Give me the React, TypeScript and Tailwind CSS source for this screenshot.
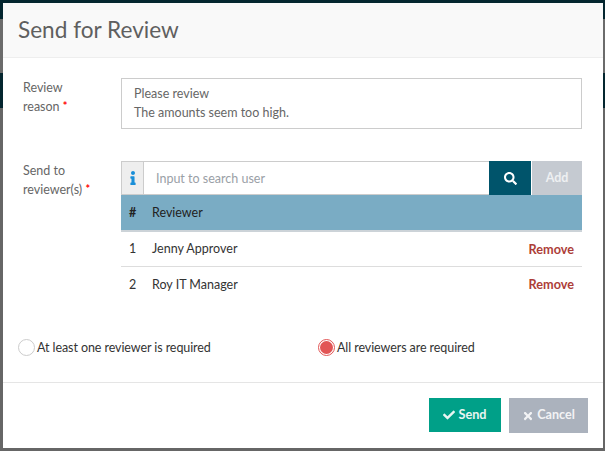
import { FaCheck, FaInfo, FaSearch, FaTimes } from "react-icons/fa";

const reviewers = [
  { id: 1, name: "Jenny Approver" },
  { id: 2, name: "Roy IT Manager" },
];

function Radio({ label, checked }: { label: string; checked?: boolean }) {
  return (
    <label className="flex items-center text-[12.5px] tracking-[-0.08px] text-[#333]">
      {checked ? (
        <span className="flex size-[17px] items-center justify-center rounded-full border border-[#e25555] bg-white">
          <span className="size-[13px] rounded-full bg-[#e25555]" />
        </span>
      ) : (
        <span className="size-[17px] rounded-full border border-[#ccc] bg-white" />
      )}
      <span className="ml-[2px] pt-[2px]">{label}</span>
    </label>
  );
}

function Required() {
  return <span className="relative -top-[1px] text-[11px] font-bold leading-none text-[#f00]">*</span>;
}

export default function App() {
  return (
    <div className="relative h-[451px] w-[605px] overflow-hidden bg-[#666] font-['Lato',sans-serif]">
      <div className="flex h-full flex-col">
        <div className="h-[19px] bg-[#04262f]" />
        <div className="h-[54px] bg-[#6b6b6b]" />
        <div className="h-[35px] bg-[#04262f]" />
        <div className="flex-1 bg-[#666]" />
      </div>
      <div className="absolute bottom-[3px] left-[3px] right-[2px] top-[3px] flex flex-col bg-white">
        <header className="flex h-[55px] items-center border-b border-[#eee] bg-[#f9f9f9] pl-[15px]">
          <h2 className="text-[22.6px] leading-none text-[#5f5f5f]">Send for Review</h2>
        </header>
        <section className="flex-1 pl-[20px] pr-[21px]">
          <div className="mt-[20px] flex">
            <div className="w-[98px] text-[12.5px] leading-[19px] text-[#666]">
              Review
              <br />
              reason <Required />
            </div>
            <div className="h-[51px] flex-1 border border-[#ccc] px-[12px] pt-[5px] text-[12.5px] leading-[19px] text-[#666]">
              Please review
              <br />
              The amounts seem too high.
            </div>
          </div>
          <div className="mt-[32px] flex">
            <div className="w-[98px] text-[12.5px] leading-[19px] text-[#666]">
              Send to
              <br />
              reviewer(s) <Required />
            </div>
            <div className="flex-1">
              <div className="flex h-[34px]">
                <div className="flex w-[23px] items-center justify-center border border-[#ccc] bg-[#eee] text-[14px] text-[#1a8fd8]">
                  <FaInfo />
                </div>
                <div className="flex flex-1 items-center border-y border-[#ccc] pl-[12px] pt-[3px] text-[12.5px] text-[#9aa0a6]">
                  Input to search user
                </div>
                <button type="button" className="flex w-[42px] items-center justify-center bg-[#00546b] text-[13px] text-white">
                  <FaSearch />
                </button>
                <button type="button" className="ml-px w-[50px] bg-[#c5cad1] text-[12.5px] font-bold text-[#eef0f2]">
                  Add
                </button>
              </div>
              <div className="flex h-[37px] items-center border-b-2 border-[#ccd3d8] bg-[#7aacc4] pt-[1px] text-[12.5px] text-[#222]">
                <span className="w-[31px] pl-[8px] font-bold">#</span>
                <span>Reviewer</span>
              </div>
              {reviewers.map((reviewer) => (
                <div
                  key={reviewer.id}
                  className="flex h-[35px] items-center border-b border-[#ddd] pt-[1px] text-[12.5px] text-[#333] last:border-b-0"
                >
                  <span className="w-[31px] pl-[8px]">{reviewer.id}</span>
                  <span className="flex-1">{reviewer.name}</span>
                  <span className="pr-[8px] text-[12.7px] font-bold text-[#ad3d38]">Remove</span>
                </div>
              ))}
            </div>
          </div>
        </section>
        <div className="flex h-[68px] items-center pb-[2px] pl-[15px]">
          <div className="w-[300px]">
            <Radio label="At least one reviewer is required" />
          </div>
          <Radio checked label="All reviewers are required" />
        </div>
        <footer className="flex h-[66px] items-start justify-end gap-[8px] border-t border-[#e5e5e5] pr-[15px] pt-[15px]">
          <button
            type="button"
            className="flex h-[34px] w-[72px] items-center justify-center gap-[3px] bg-[#00a088] text-[12.7px] font-bold text-[#e8f5f2]"
          >
            <FaCheck className="text-[12px]" />
            Send
          </button>
          <button
            type="button"
            className="flex h-[35px] w-[79px] items-center justify-center gap-[3px] bg-[#abb2bd] text-[12.6px] font-bold text-[#f2f3f5]"
          >
            <FaTimes className="text-[12px]" />
            Cancel
          </button>
        </footer>
      </div>
    </div>
  );
}
